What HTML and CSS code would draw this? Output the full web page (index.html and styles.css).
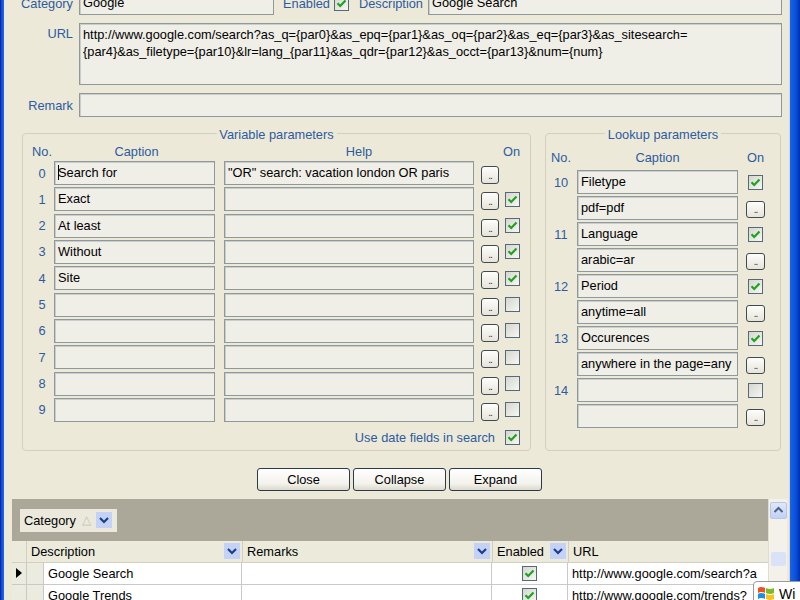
FILE: index.html
```html
<!DOCTYPE html>
<html>
<head>
<meta charset="utf-8">
<title>Search definition</title>
<link rel="stylesheet" href="styles.css">
</head>
<body>
<div class="window">
  <div class="frame-left"></div>
  <div class="client">
    <div class="form">
      <div class="row">
        <span class="lbl">Category</span>
        <div class="field cat">Google</div>
        <span class="lbl2 enabled">Enabled</span>
        <span class="cb"><svg viewBox="0 0 15 15" width="15" height="15"><path d="M3.5 7.2 L6.2 10 L11.5 4.5" fill="none" stroke="#21a121" stroke-width="2.2"/></svg></span>
        <span class="lbl2 desc">Description</span>
        <div class="field grow">Google Search</div>
      </div>
      <div class="row row-url">
        <span class="lbl">URL</span>
        <div class="field grow area">http://www.google.com/search?as_q={par0}&amp;as_epq={par1}&amp;as_oq={par2}&amp;as_eq={par3}&amp;as_sitesearch=<br>{par4}&amp;as_filetype={par10}&amp;lr=lang_{par11}&amp;as_qdr={par12}&amp;as_occt={par13}&amp;num={num}</div>
      </div>
      <div class="row">
        <span class="lbl">Remark</span>
        <div class="field grow"></div>
      </div>
    </div>

    <div class="groups">
      <div class="group var">
        <span class="gtitle">Variable parameters</span>
        <div class="vhead">
          <span class="h-no">No.</span><span class="h-cap">Caption</span><span class="h-help">Help</span><span class="h-on">On</span>
        </div>
        <div class="vrows">
          <div class="vrow"><span class="num">0</span><div class="field f1"><span class="caret"></span>Search for</div><div class="field f2">"OR" search: vacation london OR paris</div><span class="dots">..</span><span class="cbslot"></span></div>
          <div class="vrow"><span class="num">1</span><div class="field f1">Exact</div><div class="field f2"></div><span class="dots">..</span><span class="cb"><svg viewBox="0 0 15 15" width="15" height="15"><path d="M3.5 7.2 L6.2 10 L11.5 4.5" fill="none" stroke="#21a121" stroke-width="2.2"/></svg></span></div>
          <div class="vrow"><span class="num">2</span><div class="field f1">At least</div><div class="field f2"></div><span class="dots">..</span><span class="cb"><svg viewBox="0 0 15 15" width="15" height="15"><path d="M3.5 7.2 L6.2 10 L11.5 4.5" fill="none" stroke="#21a121" stroke-width="2.2"/></svg></span></div>
          <div class="vrow"><span class="num">3</span><div class="field f1">Without</div><div class="field f2"></div><span class="dots">..</span><span class="cb"><svg viewBox="0 0 15 15" width="15" height="15"><path d="M3.5 7.2 L6.2 10 L11.5 4.5" fill="none" stroke="#21a121" stroke-width="2.2"/></svg></span></div>
          <div class="vrow"><span class="num">4</span><div class="field f1">Site</div><div class="field f2"></div><span class="dots">..</span><span class="cb"><svg viewBox="0 0 15 15" width="15" height="15"><path d="M3.5 7.2 L6.2 10 L11.5 4.5" fill="none" stroke="#21a121" stroke-width="2.2"/></svg></span></div>
          <div class="vrow"><span class="num">5</span><div class="field f1"></div><div class="field f2"></div><span class="dots">..</span><span class="cb"></span></div>
          <div class="vrow"><span class="num">6</span><div class="field f1"></div><div class="field f2"></div><span class="dots">..</span><span class="cb"></span></div>
          <div class="vrow"><span class="num">7</span><div class="field f1"></div><div class="field f2"></div><span class="dots">..</span><span class="cb"></span></div>
          <div class="vrow"><span class="num">8</span><div class="field f1"></div><div class="field f2"></div><span class="dots">..</span><span class="cb"></span></div>
          <div class="vrow"><span class="num">9</span><div class="field f1"></div><div class="field f2"></div><span class="dots">..</span><span class="cb"></span></div>
        </div>
        <div class="datefield"><span class="datelbl">Use date fields in search</span><span class="cb"><svg viewBox="0 0 15 15" width="15" height="15"><path d="M3.5 7.2 L6.2 10 L11.5 4.5" fill="none" stroke="#21a121" stroke-width="2.2"/></svg></span></div>
      </div>

      <div class="group look">
        <span class="gtitle">Lookup parameters</span>
        <div class="lhead"><span class="l-no">No.</span><span class="l-cap">Caption</span><span class="l-on">On</span></div>
        <div class="lrows">
          <div class="lrow"><span class="lnum">10</span><div class="field lf">Filetype</div><span class="slot"><span class="cb"><svg viewBox="0 0 15 15" width="15" height="15"><path d="M3.5 7.2 L6.2 10 L11.5 4.5" fill="none" stroke="#21a121" stroke-width="2.2"/></svg></span></span></div>
          <div class="lrow"><span class="lnum"></span><div class="field lf">pdf=pdf</div><span class="slot"><span class="dots ldots">..</span></span></div>
          <div class="lrow"><span class="lnum">11</span><div class="field lf">Language</div><span class="slot"><span class="cb"><svg viewBox="0 0 15 15" width="15" height="15"><path d="M3.5 7.2 L6.2 10 L11.5 4.5" fill="none" stroke="#21a121" stroke-width="2.2"/></svg></span></span></div>
          <div class="lrow"><span class="lnum"></span><div class="field lf">arabic=ar</div><span class="slot"><span class="dots ldots">..</span></span></div>
          <div class="lrow"><span class="lnum">12</span><div class="field lf">Period</div><span class="slot"><span class="cb"><svg viewBox="0 0 15 15" width="15" height="15"><path d="M3.5 7.2 L6.2 10 L11.5 4.5" fill="none" stroke="#21a121" stroke-width="2.2"/></svg></span></span></div>
          <div class="lrow"><span class="lnum"></span><div class="field lf">anytime=all</div><span class="slot"><span class="dots ldots">..</span></span></div>
          <div class="lrow"><span class="lnum">13</span><div class="field lf">Occurences</div><span class="slot"><span class="cb"><svg viewBox="0 0 15 15" width="15" height="15"><path d="M3.5 7.2 L6.2 10 L11.5 4.5" fill="none" stroke="#21a121" stroke-width="2.2"/></svg></span></span></div>
          <div class="lrow"><span class="lnum"></span><div class="field lf">anywhere in the page=any</div><span class="slot"><span class="dots ldots">..</span></span></div>
          <div class="lrow"><span class="lnum">14</span><div class="field lf"></div><span class="slot"><span class="cb"></span></span></div>
          <div class="lrow"><span class="lnum"></span><div class="field lf"></div><span class="slot"><span class="dots ldots">..</span></span></div>
        </div>
      </div>
    </div>

    <div class="buttons">
      <span class="btn">Close</span><span class="btn">Collapse</span><span class="btn">Expand</span>
    </div>

    <div class="gridwrap">
      <div class="gridmain">
        <div class="groupband">
          <div class="chip"><span>Category</span><span class="sorttri">△</span><span class="dd"><svg viewBox="0 0 16 16" width="16" height="16"><path d="M4 6 L8 10 L12 6" fill="none" stroke="#1e3d8c" stroke-width="2.2"/></svg></span></div>
        </div>
        <div class="ghead">
          <div class="gh-ind"></div>
          <div class="gh gh-desc"><span>Description</span><span class="dd"><svg viewBox="0 0 16 16" width="16" height="16"><path d="M4 6 L8 10 L12 6" fill="none" stroke="#1e3d8c" stroke-width="2.2"/></svg></span></div>
          <div class="gh gh-rem"><span>Remarks</span><span class="dd"><svg viewBox="0 0 16 16" width="16" height="16"><path d="M4 6 L8 10 L12 6" fill="none" stroke="#1e3d8c" stroke-width="2.2"/></svg></span></div>
          <div class="gh gh-en"><span>Enabled</span><span class="dd"><svg viewBox="0 0 16 16" width="16" height="16"><path d="M4 6 L8 10 L12 6" fill="none" stroke="#1e3d8c" stroke-width="2.2"/></svg></span></div>
          <div class="gh gh-url"><span>URL</span></div>
        </div>
        <div class="grow-row">
          <div class="gc-ind"><span class="arrow"></span></div>
          <div class="gc-indent"></div>
          <div class="gc gc-desc">Google Search</div>
          <div class="gc gc-rem"></div>
          <div class="gc gc-en"><span class="cb"><svg viewBox="0 0 15 15" width="15" height="15"><path d="M3.5 7.2 L6.2 10 L11.5 4.5" fill="none" stroke="#21a121" stroke-width="2.2"/></svg></span></div>
          <div class="gc gc-url">http://www.google.com/search?a</div>
        </div>
        <div class="grow-row">
          <div class="gc-ind"></div>
          <div class="gc-indent"></div>
          <div class="gc gc-desc">Google Trends</div>
          <div class="gc gc-rem"></div>
          <div class="gc gc-en"><span class="cb"><svg viewBox="0 0 15 15" width="15" height="15"><path d="M3.5 7.2 L6.2 10 L11.5 4.5" fill="none" stroke="#21a121" stroke-width="2.2"/></svg></span></div>
          <div class="gc gc-url">http://www.google.com/trends?</div>
        </div>
      </div>
      <div class="vscroll">
        <span class="sbtn"><svg viewBox="0 0 17 17" width="17" height="17"><path d="M4.5 10 L8.5 6 L12.5 10" fill="none" stroke="#4d6185" stroke-width="2"/></svg></span>
        <span class="thumb"></span>
      </div>
    </div>
  </div>
  <div class="frame-right"></div>
</div>
<div class="winpop">
  <svg viewBox="0 0 18 18" width="18" height="18">
    <path d="M1 3 Q4 1 8 3 L8 8 Q4 6 1 8 Z" fill="#f0501e"/>
    <path d="M9 3 Q13 5 17 3 L17 8 Q13 10 9 8 Z" fill="#7cbb2a"/>
    <path d="M1 9 Q4 7 8 9 L8 14 Q4 12 1 14 Z" fill="#1e8fe0"/>
    <path d="M9 9 Q13 11 17 9 L17 14 Q13 16 9 14 Z" fill="#f8c21a"/>
  </svg>
  <span>Wi</span>
</div>
</body>
</html>
```

FILE: styles.css
```css
html, body {
  margin: 0;
  padding: 0;
}
body {
  width: 800px;
  height: 600px;
  overflow: hidden;
  position: relative;
  background: #ece9d8;
  font: 12.8px "Liberation Sans", Arial, sans-serif;
  color: #000;
}
.window {
  display: flex;
  height: 600px;
}
.frame-left {
  width: 4px;
  flex: none;
  background: linear-gradient(to right, #00138c, #0a4fd8 40%, #1a6cf0);
}
.frame-right {
  width: 11px;
  flex: none;
  background: linear-gradient(to right, #d8d5c7 0, #d8d5c7 1px, #1665ea 1px, #0a50d8 60%, #0030b0);
}
.client {
  flex: 1;
  min-width: 0;
  display: flex;
  flex-direction: column;
}

/* top form */
.form {
  margin-top: -9px;
  padding-right: 7px;
  display: flex;
  flex-direction: column;
  gap: 8px;
}
.row {
  display: flex;
  align-items: center;
}
.lbl {
  width: 69px;
  flex: none;
  margin-right: 6px;
  text-align: right;
  color: #2d5b9f;
}
.lbl2 {
  color: #2d5b9f;
  flex: none;
}
.enabled {
  margin-left: 9px;
  margin-right: 4px;
}
.desc {
  margin-left: 10px;
  margin-right: 5px;
}
.field {
  height: 24px;
  box-sizing: border-box;
  border: 1px solid #8f999c;
  box-shadow: inset 1px 1px 0 #c9cdcc;
  background: #efeee7;
  padding: 3px 3px 0 3px;
  line-height: 16px;
  white-space: nowrap;
  overflow: hidden;
  flex: none;
}
.cat {
  width: 195px;
}
.grow {
  flex: 1;
  min-width: 0;
}
.row-url {
  align-items: flex-start;
}
.row-url .lbl {
  padding-top: 3px;
  line-height: 16px;
}
.area {
  height: 62px;
  line-height: 17px;
  padding-top: 2px;
}

/* checkbox */
.cb {
  width: 15px;
  height: 15px;
  box-sizing: border-box;
  border: 1px solid #56697a;
  background: linear-gradient(135deg, #d6d6cf, #f7f7f3);
  display: inline-flex;
  align-items: center;
  justify-content: center;
  flex: none;
}
.cb svg {
  display: block;
  margin: -1px;
}
.cbslot {
  width: 15px;
  margin-left: 6px;
  flex: none;
}

/* ".." buttons */
.dots {
  width: 18px;
  height: 18px;
  box-sizing: border-box;
  border: 1px solid #414a52;
  border-radius: 3px;
  background: linear-gradient(#fdfdfb, #e6e4da);
  font-size: 10px;
  line-height: 10px;
  display: inline-flex;
  align-items: flex-end;
  justify-content: center;
  padding-bottom: 2px;
  color: #333;
  flex: none;
  letter-spacing: -1px;
}

/* groups */
.groups {
  display: flex;
  gap: 14px;
  margin: 16px 8px 0 18px;
}
.group {
  position: relative;
  border: 1px solid #d3d0bf;
  border-radius: 4px;
  box-sizing: border-box;
}
.gtitle {
  position: absolute;
  top: -7px;
  left: 50%;
  transform: translateX(-50%);
  padding: 0 3px;
  background: #ece9d8;
  color: #2d5b9f;
  line-height: 15px;
  white-space: nowrap;
}
.var {
  width: 509px;
  flex: none;
  padding: 10px 0 5px 7px;
}
.vhead {
  display: flex;
  height: 16px;
  line-height: 16px;
  margin-bottom: 1px;
  color: #2d5b9f;
}
.h-no {
  width: 24px;
  text-align: center;
}
.h-cap {
  width: 161px;
  text-align: center;
  padding-left: 4px;
  box-sizing: border-box;
}
.h-help {
  width: 250px;
  margin-left: 9px;
  text-align: center;
  padding-left: 20px;
  box-sizing: border-box;
}
.h-on {
  margin-left: 29px;
}
.vrows {
  display: flex;
  flex-direction: column;
  gap: 2.33px;
}
.vrow {
  display: flex;
  align-items: center;
  height: 24px;
}
.num {
  width: 24px;
  flex: none;
  text-align: center;
  color: #2d5b9f;
}
.f1 {
  width: 161px;
}
.f2 {
  width: 250px;
  margin-left: 9px;
}
.vrow .dots {
  margin-left: 7px;
  align-self: flex-end;
  margin-bottom: 1px;
}
.vrow .cb {
  margin-left: 6px;
}
.caret {
  display: inline-block;
  width: 1px;
  height: 15px;
  background: #000;
  vertical-align: -3px;
  margin-right: -1px;
}
.datefield {
  width: 490px;
  display: flex;
  justify-content: flex-end;
  align-items: center;
  margin-top: 8px;
  height: 15px;
}
.datelbl {
  color: #2d5b9f;
  margin-right: 10px;
}

.look {
  flex: 1;
  padding: 16px 0 0 2px;
}
.lhead {
  display: flex;
  height: 16px;
  line-height: 16px;
  margin-bottom: 4px;
  color: #2d5b9f;
}
.l-no {
  width: 26px;
  text-align: center;
}
.l-cap {
  width: 161px;
  margin-left: 3px;
  text-align: center;
}
.l-on {
  width: 19px;
  margin-left: 8px;
  text-align: center;
}
.lrows {
  display: flex;
  flex-direction: column;
  gap: 2px;
}
.lrow {
  display: flex;
  align-items: center;
  height: 24px;
}
.lnum {
  width: 26px;
  flex: none;
  text-align: center;
  color: #2d5b9f;
}
.lf {
  width: 161px;
  margin-left: 3px;
}
.slot {
  width: 19px;
  margin-left: 8px;
  display: flex;
  justify-content: center;
  flex: none;
}
.ldots {
  width: 19px;
  height: 17px;
  margin-top: 3px;
}

/* buttons */
.buttons {
  display: flex;
  justify-content: center;
  gap: 3px;
  margin-top: 17px;
  padding-left: 6px;
}
.btn {
  width: 93px;
  height: 23px;
  box-sizing: border-box;
  border: 1px solid #2d3b48;
  border-radius: 3px;
  background: linear-gradient(#ffffff, #f3f2ec 70%, #dcd9cc);
  text-align: center;
  line-height: 21px;
}

/* data grid */
.gridwrap {
  flex: 1;
  min-height: 0;
  display: flex;
  margin: 8px 2px 0 8px;
}
.gridmain {
  flex: 1;
  min-width: 0;
  overflow: hidden;
  background: #fff;
}
.groupband {
  height: 42px;
  box-sizing: border-box;
  background: #aca899;
  padding: 10px 0 0 8px;
}
.chip {
  width: 97px;
  height: 23px;
  box-sizing: border-box;
  background: #ebe9dc;
  display: flex;
  align-items: center;
  padding-left: 4px;
}
.sorttri {
  color: #c4c2b6;
  font-size: 12px;
  margin-left: 6px;
}
.dd {
  width: 16px;
  height: 16px;
  background: #c3d2f6;
  display: inline-block;
  flex: none;
}
.dd svg {
  display: block;
}
.chip .dd {
  margin-left: 5px;
}
.ghead {
  display: flex;
  height: 22px;
  background: #ebeadb;
  border-bottom: 1px solid #d2cfc0;
  box-sizing: border-box;
}
.gh-ind {
  width: 14px;
  border-right: 1px solid #d2cfc0;
  flex: none;
}
.gh {
  display: flex;
  align-items: center;
  justify-content: space-between;
  box-sizing: border-box;
  padding: 0 2px 0 4px;
  border-right: 1px solid #d2cfc0;
  flex: none;
}
.gh-desc {
  width: 216px;
}
.gh-rem {
  width: 250px;
}
.gh-en {
  width: 76px;
}
.gh-url {
  flex: 1;
  border-right: none;
}
.grow-row {
  display: flex;
  height: 22px;
  border-bottom: 1px solid #c9c9c9;
  box-sizing: border-box;
}
.gc-ind {
  width: 15px;
  flex: none;
  background: #ecebe0;
  border-right: 1px solid #c9c9c9;
  box-sizing: border-box;
  display: flex;
  align-items: center;
  justify-content: center;
}
.arrow {
  width: 0;
  height: 0;
  border-top: 5px solid transparent;
  border-bottom: 5px solid transparent;
  border-left: 6px solid #000;
}
.gc-indent {
  width: 17px;
  flex: none;
  background: #ecebe0;
  border-right: 1px solid #c9c9c9;
  box-sizing: border-box;
}
.gc {
  flex: none;
  box-sizing: border-box;
  border-right: 1px solid #c9c9c9;
  padding: 0 4px;
  line-height: 21px;
  white-space: nowrap;
  overflow: hidden;
}
.gc-desc {
  width: 198px;
}
.gc-rem {
  width: 250px;
}
.gc-en {
  width: 76px;
  display: flex;
  align-items: center;
  justify-content: center;
}
.gc-url {
  flex: 1;
  border-right: none;
}
.vscroll {
  width: 19px;
  flex: none;
  background: #f3f1ea;
  border-left: 1px solid #e0ddd0;
  box-sizing: border-box;
  display: flex;
  flex-direction: column;
  align-items: center;
  padding-top: 3px;
}
.sbtn {
  width: 17px;
  height: 17px;
  border-radius: 2px;
  background: linear-gradient(#dfe7fb, #c1d1f6);
  border: 1px solid #b8c6e8;
  box-sizing: border-box;
  display: block;
}
.sbtn svg {
  display: block;
  margin: -1px;
}
.thumb {
  width: 15px;
  height: 14px;
  margin-top: 33px;
  background: #d9e2f7;
  border-radius: 2px;
}

/* taskbar notification peek */
.winpop {
  position: absolute;
  left: 753px;
  top: 581px;
  width: 60px;
  height: 26px;
  box-sizing: border-box;
  background: #fff;
  border: 1px solid #9a9a9a;
  border-radius: 4px;
  display: flex;
  align-items: center;
  padding-left: 3px;
  gap: 4px;
  font-size: 14px;
}
.winpop svg {
  display: block;
}
```
